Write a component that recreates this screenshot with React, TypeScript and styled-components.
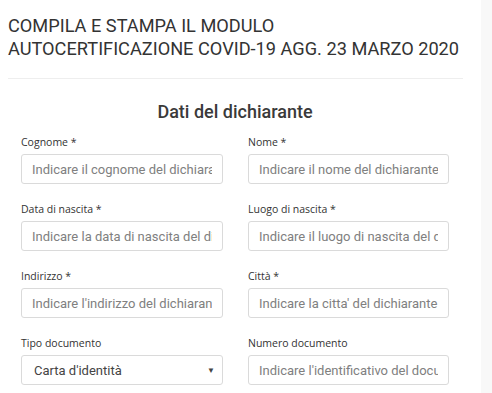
import React from "react";
import styled, { createGlobalStyle } from "styled-components";

const Global = createGlobalStyle`
  html, body { margin: 0; padding: 0; background: #fff; }
  body { font-family: Roboto, "Open Sans", sans-serif; color: #333; }
  * { box-sizing: border-box; }
`;

const Page = styled.div`
  display: grid;
  grid-template-columns: 481px 1fr;
  min-height: 393px;
`;

const Main = styled.main`
  padding: 14px 18px 0 8px;
`;

const Side = styled.aside`
  background: #f8f8f8;
`;

const Title = styled.h1`
  margin: 0;
  font-family: Roboto, sans-serif;
  font-weight: 400;
  font-size: 18.2px;
  line-height: 23px;
  color: #333;
  white-space: nowrap;
`;

const Divider = styled.hr`
  border: 0;
  border-top: 1px solid #eeeeee;
  margin: 18px 0 0 0;
`;

const Form = styled.form`
  padding: 0 14px 0 13px;
`;

const Heading = styled.h2`
  margin: 21px 0 10px 0;
  text-align: center;
  font-family: Roboto, sans-serif;
  font-weight: 500;
  font-size: 18px;
  line-height: 24px;
  color: #3a3a3a;
`;

const Grid = styled.div`
  display: grid;
  grid-template-columns: 202px 201px;
  column-gap: 25px;
  row-gap: 17px;
`;

const Field = styled.div`
  display: flex;
  flex-direction: column;
  gap: 4px;
`;

const Label = styled.label`
  font-family: "Open Sans", sans-serif;
  font-size: 10.5px;
  line-height: 16px;
  color: #333;
`;

const Input = styled.input`
  height: 30px;
  width: 100%;
  border: 1px solid #dadada;
  border-radius: 3px;
  padding: 0 10px;
  font-family: Roboto, sans-serif;
  font-size: 13px;
  color: #555;
  background: #fff;
  &::placeholder { color: #808080; }
`;

const SelectBox = styled.div`
  height: 30px;
  border: 1px solid #dadada;
  border-radius: 3px;
  padding: 0 12px;
  display: flex;
  align-items: center;
  justify-content: space-between;
  font-family: Roboto, sans-serif;
  font-size: 13px;
  color: #444;
`;

const Caret = styled.span`
  font-size: 8px;
  color: #444;
  margin-right: -5px;
`;

const fields: { label: string; ph?: string; select?: string }[] = [
  { label: "Cognome *", ph: "Indicare il cognome del dichiarante" },
  { label: "Nome *", ph: "Indicare il nome del dichiarante" },
  { label: "Data di nascita *", ph: "Indicare la data di nascita del dichiarante" },
  { label: "Luogo di nascita *", ph: "Indicare il luogo di nascita del dichiarante" },
  { label: "Indirizzo *", ph: "Indicare l'indirizzo del dichiarante" },
  { label: "Città *", ph: "Indicare la citta' del dichiarante" },
  { label: "Tipo documento", select: "Carta d'identità" },
  { label: "Numero documento", ph: "Indicare l'identificativo del documento" },
];

export default function App() {
  return (
    <>
      <Global />
      <Page>
        <Main>
          <Title>
            COMPILA E STAMPA IL MODULO
            <br />
            AUTOCERTIFICAZIONE COVID-19 AGG. 23 MARZO 2020
          </Title>
          <Divider />
          <Form>
            <Heading>Dati del dichiarante</Heading>
            <Grid>
              {fields.map((f) => (
                <Field key={f.label}>
                  <Label>{f.label}</Label>
                  {f.select ? (
                    <SelectBox>
                      <span>{f.select}</span>
                      <Caret>▼</Caret>
                    </SelectBox>
                  ) : (
                    <Input placeholder={f.ph} />
                  )}
                </Field>
              ))}
            </Grid>
          </Form>
        </Main>
        <Side />
      </Page>
    </>
  );
}
